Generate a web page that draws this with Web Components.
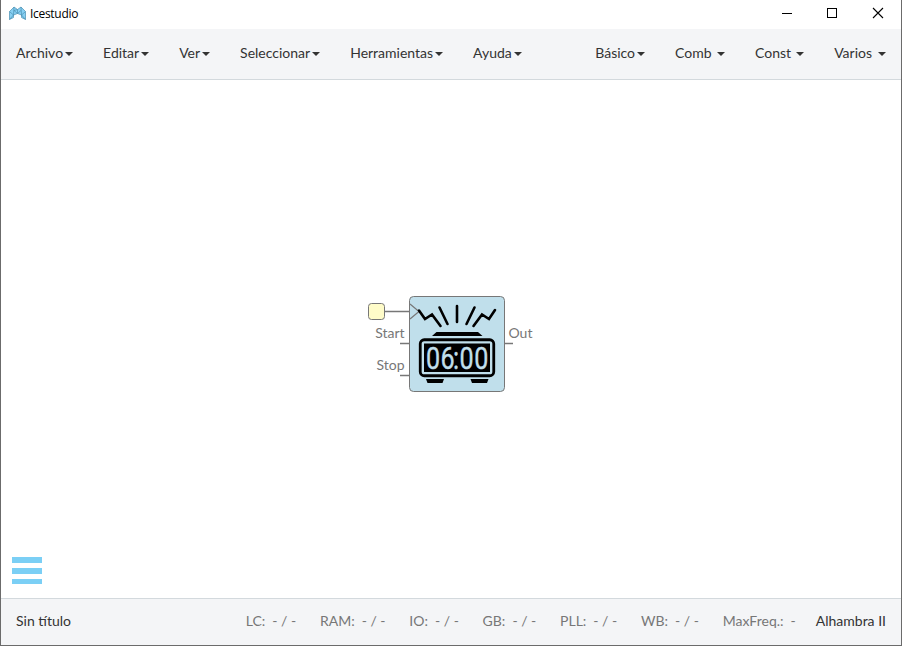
<!DOCTYPE html>
<html lang="es"><head><meta charset="utf-8"><title>Icestudio</title>
<style>html,body{margin:0;height:100%;overflow:hidden;background:#fff}body{font:14px Lato,sans-serif}</style></head><body>
<ice-window></ice-window>
<script>
const def=(name,html,init)=>customElements.define(name,class extends HTMLElement{
 constructor(){super();this.attachShadow({mode:'open'}).innerHTML=html;}
 connectedCallback(){if(init)init(this,this.shadowRoot);}
});
def('ice-titlebar',`<style>
:host{display:flex;height:29px;align-items:center;background:#fff;font:12px "Open Sans","Noto Sans",sans-serif;letter-spacing:-.3px;color:#000;padding-left:8px;box-sizing:border-box}
svg{display:block}.t{margin-left:4px;flex:1;padding-bottom:2px}.logo{margin-bottom:2px}
</style><svg class="logo" width="17" height="15" viewBox="0 0 17 15" stroke="#4b8fb2" stroke-width=".7" stroke-linejoin="round"><path fill="#87d0f3" d="M.5 5.500 5 1 8.500 3.500 12 1 16.500 5.500V13.500L12.500 11.500V9L8.500 7.500 4.500 9V11.500L.5 13.500Z"/><path fill="none" d="M.5 5.500 4.500 9 5 1M5 4.500 8.500 3.500V7.500M16.500 5.500 12.500 9 12 1M.5 13.500 4.500 9M16.500 13.500 12.500 9M5 4.500 8.500 7.500 12 4.500"/></svg><span class="t">Icestudio</span>
<svg width="138" height="29" fill="none" stroke="#000" shape-rendering="crispEdges"><path d="M19 13.500H29M64.500 8.500h9v9h-9z"/><path shape-rendering="auto" d="M110 8l10 10M120 8l-10 10" stroke-width="1.100"/></svg>`);
def('ice-menu',`<style>
:host{display:flex;align-items:center;white-space:pre}
i{border:4px solid transparent;border-top-color:currentColor;border-bottom:0;margin:2px 0 0 var(--g,2px)}
</style><slot></slot><i></i>`);
def('ice-menubar',`<style>
:host{display:flex;height:51px;box-sizing:border-box;background:#f4f5f7;border-bottom:1px solid #d3d9dd;color:#333;padding:0 15px 3px;justify-content:space-between}
div{display:flex;gap:30px}
</style><div><ice-menu>Archivo</ice-menu><ice-menu>Editar</ice-menu><ice-menu>Ver</ice-menu><ice-menu>Seleccionar</ice-menu><ice-menu>Herramientas</ice-menu><ice-menu>Ayuda</ice-menu></div>
<div><ice-menu style="--g:2px">Básico</ice-menu><ice-menu style="--g:5.5px">Comb</ice-menu><ice-menu style="--g:5px">Const</ice-menu><ice-menu style="--g:6px">Varios</ice-menu></div>`);
def('ice-alarm-block',`<style>
:host{display:block;width:180px;height:100px}svg{display:block}text{font:14px Lato,sans-serif;fill:#777}
.d{font:31px Roboto,sans-serif;fill:#c0dfeb;stroke:#c0dfeb;stroke-width:.4px}
</style><svg width="180" height="100" viewBox="364 294 180 100">
<path d="M385 311.500H410M400 343.500h9M400 375.500h9M505 343.500h8" stroke="#777" stroke-width="1.600"/>
<rect x="368.500" y="303.500" width="16" height="16" rx="3" fill="#fffcc9" stroke="#777"/>
<rect x="409.500" y="296.500" width="95" height="95" rx="4" fill="#c0dfeb" stroke="#777"/>
<path d="M410 304l9 7.500-9 7.500" fill="none" stroke="#777" stroke-width="1.200"/>
<path d="M419 310.500l6 8.500 7-4.500 8.500 11.500M439.500 307.500l8 16.500M457 306v16M474.500 307.500l-8 16.500M473.500 326l8.500-11.500 7 4.500 6-9" fill="none" stroke="#000" stroke-width="2.600" stroke-linecap="round"/>
<path d="M432 336l4.500-4h41.500l4.500 4zM426 379h18l-1.500 4h-15zM470.500 379h18l-1.500 4h-15z"/>
<rect x="420.250" y="339.750" width="73.500" height="36" rx="4" fill="none" stroke="#000" stroke-width="2.800"/><rect x="424" y="343.500" width="66" height="28.500"/>
<text class="d" transform="translate(426 369) scale(.81 1)" x="0 18 33.500 41.500 59.500">06:00</text>
<text x="404.500" y="338" text-anchor="end">Start</text><text x="404.500" y="370" text-anchor="end">Stop</text><text x="508.500" y="338">Out</text></svg>`);
def('ice-toggle',`<style>:host{display:grid;gap:5px;width:30px}i{height:6px;background:#7bcff5}i:last-child{height:5px}</style><i></i><i></i><i></i>`);
def('ice-canvas',`<style>:host{display:block;position:relative;flex:1;background:#fff}
ice-alarm-block{position:absolute;left:363px;top:214px}ice-toggle{position:absolute;left:11px;top:477px}</style><ice-alarm-block></ice-alarm-block><ice-toggle></ice-toggle>`);
def('ice-stat',`<style>:host{display:block;white-space:pre;color:#777}b{font-weight:400;margin-left:7px}</style><slot></slot><b></b>`,(h,r)=>r.querySelector('b').textContent=h.getAttribute('value'));
def('ice-footer',`<style>
:host{display:flex;height:47px;box-sizing:border-box;align-items:center;background:#f4f5f7;border-top:1px solid #d3d9dd;color:#333;padding:0 15px 3px}
.n{flex:1}.s{display:flex;gap:23.75px;margin-right:20px}</style><span class="n">Sin título</span><div class="s"><ice-stat value="- / -">LC:</ice-stat><ice-stat value="- / -">RAM:</ice-stat><ice-stat value="- / -">IO:</ice-stat><ice-stat value="- / -">GB:</ice-stat><ice-stat value="- / -">PLL:</ice-stat><ice-stat value="- / -">WB:</ice-stat><ice-stat value="-">MaxFreq.:</ice-stat></div><span>Alhambra II</span>`);
def('ice-window',`<style>:host{display:flex;flex-direction:column;height:646px;box-sizing:border-box;border:solid #6b6b6b;border-width:0 1px 1px}</style><ice-titlebar></ice-titlebar><ice-menubar></ice-menubar><ice-canvas></ice-canvas><ice-footer></ice-footer>`);
</script></body></html>
